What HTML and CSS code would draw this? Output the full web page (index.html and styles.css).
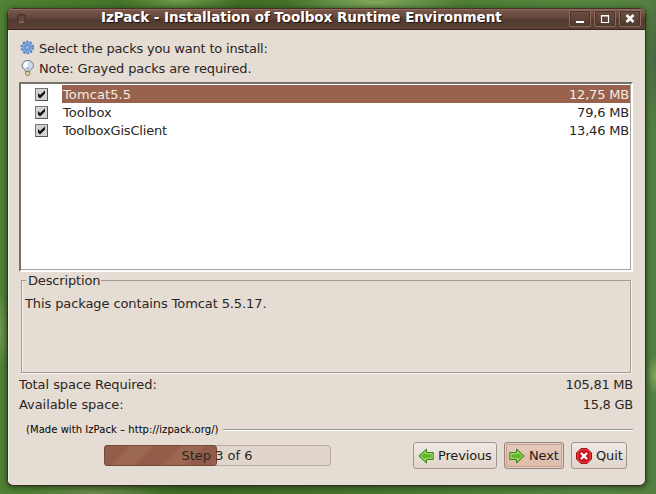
FILE: index.html
```html
<!DOCTYPE html>
<html lang="en">
<head>
<meta charset="utf-8">
<title>IzPack</title>
<link rel="stylesheet" href="styles.css">
</head>
<body>
<div class="window">
  <header class="titlebar">
    <span class="menu-dot"></span>
    <h1 class="title">IzPack - Installation of Toolbox Runtime Environment</h1>
    <div class="controls">
      <span class="control"><svg width="20" height="15" viewBox="0 0 20 15"><path d="M6 10h8v2H6z" fill="#fff"/></svg></span>
      <span class="control"><svg width="20" height="15" viewBox="0 0 20 15"><path d="M6.500 4.500h7v7h-7z" fill="none" stroke="#fff" stroke-width="1.200"/><path d="M6 4h8v1.500H6z" fill="#fff"/></svg></span>
      <span class="control"><svg width="20" height="15" viewBox="0 0 20 15"><path d="M6.500 4l7 7M13.500 4l-7 7" stroke="#fff" stroke-width="2.500"/></svg></span>
    </div>
  </header>
  <main class="content">
    <div class="hint"><svg class="hint-icon" width="16" height="16" viewBox="0 0 16 16"><circle cx="7.300" cy="7.500" r="5.700" fill="none" stroke="#5580bf" stroke-width="2.200" stroke-dasharray="2.200 1.380"/><circle cx="7.300" cy="7.500" r="4.900" fill="#85aee0" stroke="#6a97d3"/><circle cx="7.300" cy="7.500" r="2.700" fill="#a5c6ec" stroke="#4876b8"/><circle cx="7.300" cy="7.500" r="1.100" fill="#e5dcd3" stroke="#4876b8" stroke-width=".6"/></svg><span class="t-select">Select the packs you want to install:</span></div>
    <div class="hint"><svg class="hint-icon" width="16" height="16" viewBox="0 0 16 16"><path d="M5.600 11.500C5.500 9.500 2 8.800 2 5.600a5.700 5.200 0 0 1 11.400 0C13.400 8.800 9.900 9.500 9.800 11.500z" fill="#d0daea" stroke="#74777e"/><path d="M3.300 5.500Q3.600 2 7.500 1.400L8 6 6.500 8Q3.700 7.500 3.300 5.500z" fill="#fff"/><path d="M6.700 7l1 3.500 1-3.500" fill="none" stroke="#8c98ac" stroke-width=".7"/><path d="M5.700 11.500h4v3.200l-1 .8h-2l-1-.8z" fill="#e0cf8c" stroke="#7d724c" stroke-width=".8"/></svg><span class="t-note">Note: Grayed packs are required.</span></div>
    <div class="list">
      <div class="row selected"><span class="check"><svg width="13" height="13" viewBox="0 0 13 13"><path d="M3 5v3.500l2 2L10 5.500V2.500L5 7z" fill="#111"/></svg></span><div class="cells"><span class="t-tomcat">Tomcat5.5</span><span>12,75 MB</span></div></div>
      <div class="row"><span class="check"><svg width="13" height="13" viewBox="0 0 13 13"><path d="M3 5v3.500l2 2L10 5.500V2.500L5 7z" fill="#111"/></svg></span><div class="cells"><span class="t-box">Toolbox</span><span>79,6 MB</span></div></div>
      <div class="row"><span class="check"><svg width="13" height="13" viewBox="0 0 13 13"><path d="M3 5v3.500l2 2L10 5.500V2.500L5 7z" fill="#111"/></svg></span><div class="cells"><span>ToolboxGisClient</span><span>13,46 MB</span></div></div>
    </div>
    <fieldset class="description"><legend><span>Description</span></legend><p>This package contains Tomcat 5.5.17.</p></fieldset>
    <div class="space"><span>Total space Required:</span><span class="amount">105,81 MB</span></div>
    <div class="space"><span>Available space:</span><span class="amount">15,8 GB</span></div>
    <div class="made"><span>(Made with IzPack – http://izpack.org/)</span><i class="rule"></i></div>
    <footer class="footer">
      <div class="progress"><div class="fill"></div><span class="step">Step 3 of 6</span></div>
      <div class="buttons">
        <button class="btn prev"><svg width="16" height="16" viewBox="0 0 16 16"><path d="M.8 8L8.500 1v3.500h6.700v7H8.500V15z" fill="#64b52d" stroke="#3b8416"/><path d="M2.400 8L7.500 3.400v2.200h6.600v4.800H7.500v2.200z" fill="none" stroke="#a7df76"/></svg><span>Previous</span></button>
        <button class="btn next"><svg width="16" height="16" viewBox="0 0 16 16"><path d="M15.200 8L7.500 1v3.500H.8v7h6.700V15z" fill="#64b52d" stroke="#3b8416"/><path d="M13.600 8L8.500 3.400v2.200H1.900v4.800h6.600v2.200z" fill="none" stroke="#a7df76"/></svg><span>Next</span></button>
        <button class="btn quit"><svg width="16" height="16" viewBox="0 0 16 16"><path d="M5 .5h6L15.500 5v6L11 15.500H5L.5 11V5z" fill="#cc1519" stroke="#a30a10"/><path d="M5.400 1.500h5.200l3.900 3.900v5.200l-3.900 3.900H5.400l-3.900-3.900V5.400z" fill="none" stroke="#e2545a" stroke-width=".8"/><path d="M5 5l6 6M11 5l-6 6" stroke="#fff" stroke-width="2.300"/></svg><span>Quit</span></button>
      </div>
    </footer>
  </main>
</div>
</body>
</html>
```
FILE: styles.css
```css
* { box-sizing: border-box; }
body {
  margin: 0;
  width: 656px;
  height: 494px;
  padding: 8px 10px 8px 7px;
  overflow: hidden;
  font: 13px/18px "DejaVu Sans", sans-serif;
  color: #2b2623;
  background:
    radial-gradient(ellipse 90px 14px at 375px 2px, #7fa85d, transparent),
    radial-gradient(ellipse 60px 14px at 180px 0, #6f9c4c, transparent),
    radial-gradient(ellipse 70px 12px at 95px 494px, #6b8a50, transparent),
    radial-gradient(ellipse 10px 70px at 656px 60px, #4a6248, transparent),
    radial-gradient(ellipse 10px 20px at 656px 375px, #85a562, transparent),
    radial-gradient(ellipse 10px 40px at 0 330px, #719652, transparent),
    linear-gradient(90deg, #4f8233, #3d6b24 30%, #487730 60%, #568640 90%, #537f40);
}
.window {
  height: 478px;
  border: 1px solid #3b2a24;
  border-top: 0;
  border-radius: 6px;
  background: #e5dcd3;
  overflow: hidden;
  box-shadow: 0 1px 5px 1px rgba(15, 25, 8, .5);
}
.titlebar {
  height: 22px;
  display: grid;
  grid-template-columns: 93px 1fr 76px;
  align-items: center;
  background: linear-gradient(#7b5a4e, #634438 45%, #523a31 55%, #5b4137);
  border-top: 1px solid #46312a;
  border-bottom: 1px solid #36251f;
  box-shadow: inset 0 1px #916a5b;
}
.menu-dot {
  width: 9px;
  height: 9px;
  margin: -2px 0 0 9px;
  border-radius: 50%;
  background: #65483d;
  border: 1px solid #3b2821;
  border-bottom-color: #9a7667;
}
.title {
  margin: -4px 0 0;
  font-size: 13.5px;
  line-height: 18px;
  letter-spacing: -.05px;
  color: #fff;
  white-space: nowrap;
  text-shadow: 1px 1px 1px #211510;
}
.controls { display: flex; gap: 3px; margin-top: -2px; }
.control {
  width: 22px;
  height: 17px;
  border: 1px solid #8d6b5d;
  border-radius: 2px;
  background: linear-gradient(#6b4d42, #513a31);
  box-shadow: inset 0 0 0 1px #49332b;
}
.control svg { display: block; }
.content {
  height: 456px;
  padding: 8px 12px 0 11px;
  border: solid #f1ece7;
  border-width: 0 0 0 1px;
}
.hint { display: flex; align-items: center; gap: 3px; height: 20px; white-space: nowrap; }
.hint span { padding-top: 1px; }
.t-select { letter-spacing: -.2px; }
.t-note { letter-spacing: -.12px; }
.hint-icon { flex: none; }
.list {
  height: 190px;
  margin: 4px 0 0 -1px;
  padding: 1px 1px 0 1px;
  background: #fff;
  border: 2px solid #77716b;
  border-right-color: #fff;
  border-bottom-color: #fff;
  box-shadow: inset -1px -1px #aaa29b;
}
.row { display: flex; align-items: center; height: 18px; }
.check {
  width: 13px;
  height: 13px;
  margin: 0 14px 0 13px;
  background: #d3d3d3;
  border: 1px solid #777;
  border-right-color: #555;
  border-bottom-color: #555;
  flex: none;
}
.check svg { display: block; margin: -1px; }
.cells { flex: 1; display: flex; justify-content: space-between; padding: 0 1px; height: 18px; line-height: 19px; letter-spacing: -.18px; }
.cells .t-tomcat { letter-spacing: .1px; }
.cells .t-box { letter-spacing: 0; }
.selected .cells { background: #99624d; color: #f7ebe4; }
.description {
  height: 101px;
  margin: 0 2px 0 1px;
  padding: 6px 3px;
  border: 1px solid #a29b94;
  box-shadow: 1px 0 #f6f1ec, 0 1px #f6f1ec, inset 1px 0 #f6f1ec;
}
.description legend { margin-left: 1px; padding: 0 1px 0 2px; height: 16px; line-height: 18px; letter-spacing: -.15px; }
.description p { margin: 0; line-height: 19px; letter-spacing: -.1px; }
.space { display: flex; justify-content: space-between; height: 20px; line-height: 20px; margin-left: -1px; position: relative; top: 2px; letter-spacing: -.06px; }
.amount { letter-spacing: -.25px; }
.made { display: flex; align-items: center; gap: 4px; height: 18px; margin-top: 8px; padding-left: 6px; font-size: 10px; letter-spacing: .05px; color: #000; white-space: nowrap; }
.rule { flex: 1; height: 2px; background: #929a91; border-bottom: 1px solid #fff; }
.footer { display: flex; justify-content: space-between; margin-top: 3px; padding: 0 6px 0 84px; }
.progress {
  position: relative;
  width: 227px;
  height: 21px;
  margin-top: 3px;
  border: 1px solid #b9aaa0;
  border-radius: 3px;
  background: #e0d6cd;
}
.fill {
  width: 113px;
  height: 21px;
  margin: -1px;
  border: 1px solid #734b3b;
  border-radius: 3px;
  background: repeating-linear-gradient(135deg, #935d49 0 16px, #9d6852 20px 32px, #935d49 36px);
}
.step { position: absolute; inset: 0 1px 0 0; text-align: center; line-height: 20px; }
.buttons { display: flex; gap: 7px; }
.btn {
  display: flex;
  align-items: center;
  gap: 4px;
  height: 27px;
  padding: 0 0 0 4px;
  border: 1px solid #a3978d;
  border-radius: 3px;
  background: linear-gradient(#efe9e4, #e0d5cb);
  font: inherit;
  letter-spacing: -.15px;
  color: #211c19;
  white-space: nowrap;
}
.btn svg { flex: none; }
.prev { width: 84px; }
.next { width: 60px; background: linear-gradient(#e6cabd, #dfb9a7); border-color: #98877d; box-shadow: inset 0 0 0 1px #e4cfc4, inset 0 0 0 2px #c7a594; }
.quit { width: 56px; }
```
